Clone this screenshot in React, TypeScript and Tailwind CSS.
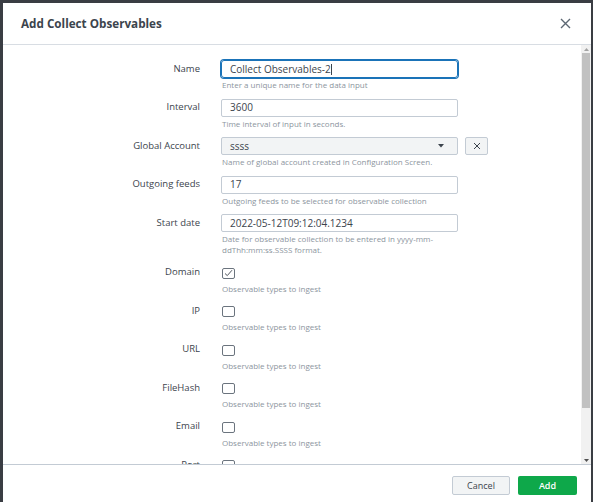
import React from "react";

const font = { fontFamily: '"Open Sans", "Liberation Sans", sans-serif' };

function Row({
  label,
  help,
  children,
}: {
  label: string;
  help: React.ReactNode;
  children: React.ReactNode;
}) {
  return (
    <div className="flex mb-[8.5px]">
      <div className="w-[197px] shrink-0 h-[18px] flex items-center justify-end text-[9.5px] text-[#3c444d]">
        {label}
      </div>
      <div className="ml-[21px] w-[237px]">
        <div className="h-[18px] flex items-center">{children}</div>
        <div className="mt-[1px] text-[8px] leading-[11px] text-[#8c959e] pl-[1px]">{help}</div>
      </div>
    </div>
  );
}

function TextBox({ value, focused }: { value: string; focused?: boolean }) {
  return (
    <div
      className={
        focused
          ? "w-[237px] h-[18px] rounded-[3px] border border-[#1a73b8] shadow-[0_0_0_1px_#1a73b8] flex items-center pl-[8px] text-[10px] text-[#3c444d]"
          : "w-[237px] h-[18px] rounded-[2px] border border-[#c3cbd4] flex items-center pl-[8px] text-[10px] text-[#3c444d]"
      }
    >
      {value}
      {focused && <span className="inline-block w-[1px] h-[11px] bg-[#3c444d]" />}
    </div>
  );
}

function Check({ checked }: { checked?: boolean }) {
  return (
    <div className="w-[13px] h-[11px] mt-[1px] ml-[1px] rounded-[2px] border border-[#6b747e] bg-white flex items-center justify-center">
      {checked && (
        <svg width="9" height="8" viewBox="0 0 9 8">
          <path d="M1 4.5 L3.3 6.6 L8 1.2" fill="none" stroke="#3c444d" strokeWidth="0.9" />
        </svg>
      )}
    </div>
  );
}

export default function App() {
  const types = ["Domain", "IP", "URL", "FileHash", "Email", "Port"];
  return (
    <div className="w-[593px] h-[502px] bg-[#3a3d43] pt-[3px] pl-[3px] pr-[2px] overflow-hidden" style={font}>
      <div className="bg-white h-[499px] flex flex-col">
        <div className="h-[42px] shrink-0 border-b border-[#d8dde3] flex items-center justify-between pl-[18px] pr-[20px]">
          <div className="text-[11.7px] font-bold text-[#3c444d]">Add Collect Observables</div>
          <svg width="11" height="11" viewBox="0 0 11 11">
            <path d="M1 1 L10 10 M10 1 L1 10" stroke="#5c6773" strokeWidth="1.4" />
          </svg>
        </div>
        <div className="h-[419px] shrink-0 flex">
          <div className="flex-1 overflow-hidden pt-[15px]">
            <Row label="Name" help="Enter a unique name for the data input">
              <TextBox value="Collect Observables-2" focused />
            </Row>
            <Row label="Interval" help="Time interval of input in seconds.">
              <TextBox value="3600" />
            </Row>
            <Row label="Global Account" help="Name of global account created in Configuration Screen.">
              <div className="flex items-center">
                <div className="w-[237px] h-[18px] shrink-0 rounded-[2px] border border-[#c3cbd4] bg-[#f2f4f5] flex items-center justify-between pl-[8px] pr-[13px] text-[10px] text-[#3c444d]">
                  <span>ssss</span>
                  <svg width="6" height="4" viewBox="0 0 6 4">
                    <path d="M0 0 L6 0 L3 3.5 Z" fill="#3c444d" />
                  </svg>
                </div>
                <div className="ml-[7px] w-[23px] h-[18px] shrink-0 rounded-[2px] border border-[#c3cbd4] bg-[#f2f4f5] flex items-center justify-center">
                  <svg width="8" height="8" viewBox="0 0 8 8">
                    <path d="M1 1 L7 7 M7 1 L1 7" stroke="#3c444d" strokeWidth="1" />
                  </svg>
                </div>
              </div>
            </Row>
            <Row label="Outgoing feeds" help="Outgoing feeds to be selected for observable collection">
              <TextBox value="17" />
            </Row>
            <Row
              label="Start date"
              help={
                <>
                  <div className="whitespace-nowrap">Date for observable collection to be entered in yyyy-mm-</div>
                  <div className="whitespace-nowrap">ddThh:mm:ss.SSSS format.</div>
                </>
              }
            >
              <TextBox value="2022-05-12T09:12:04.1234" />
            </Row>
            {types.map((t, i) => (
              <Row key={t} label={t} help="Observable types to ingest">
                <Check checked={i === 0} />
              </Row>
            ))}
          </div>
          <div className="w-[10px] shrink-0 bg-[#f1f1f1] flex flex-col items-center">
            <div className="h-[8px] flex items-center justify-center">
              <svg width="5" height="3" viewBox="0 0 5 3">
                <path d="M0 3 L5 3 L2.5 0 Z" fill="#a3a3a3" />
              </svg>
            </div>
            <div className="w-[8px] h-[355px] bg-[#c1c1c1]" />
            <div className="flex-1" />
            <div className="h-[8px] flex items-center justify-center">
              <svg width="5" height="3" viewBox="0 0 5 3">
                <path d="M0 0 L5 0 L2.5 3 Z" fill="#505050" />
              </svg>
            </div>
          </div>
        </div>
        <div className="flex-1 border-t border-[#c3cbd4] flex justify-end items-start pt-[11px] pr-[14px] gap-[8px]">
          <div className="w-[58px] h-[19px] rounded-[2px] border border-[#c3cbd4] bg-[#f2f4f5] flex items-center justify-center text-[9px] text-[#3c444d]">
            Cancel
          </div>
          <div className="w-[59px] h-[19px] rounded-[2px] bg-[#0ea84a] flex items-center justify-center text-[9px] font-semibold text-white">
            Add
          </div>
        </div>
      </div>
    </div>
  );
}
